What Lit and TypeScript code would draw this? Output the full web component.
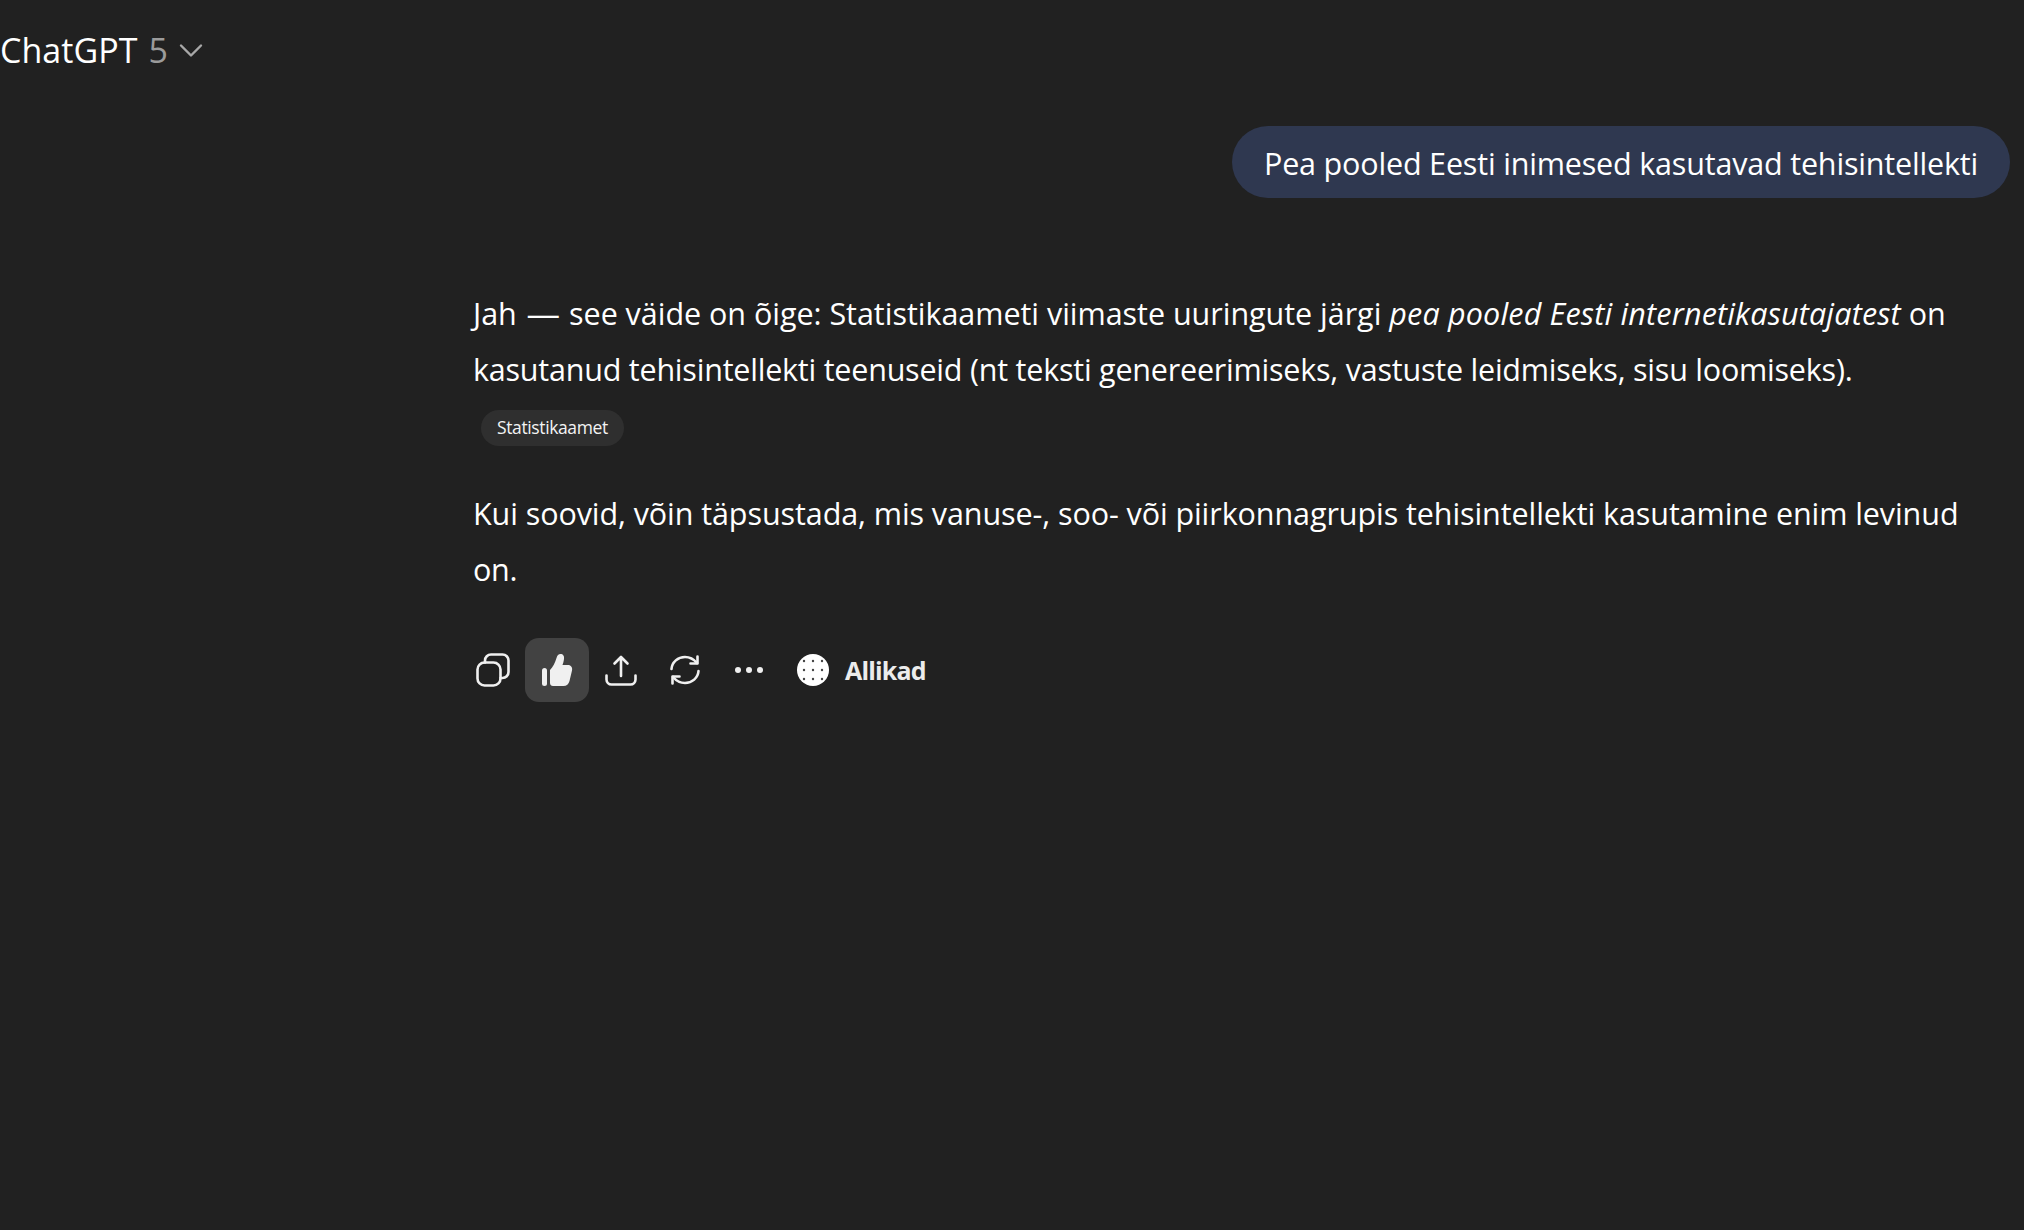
import { LitElement, html, css } from "lit";
import { customElement } from "lit/decorators.js";

@customElement("app-root")
export class AppRoot extends LitElement {
  static styles = css`
    :host {
      display: block;
      width: 2024px;
      height: 1230px;
      background: #212121;
      color: #fff;
      font-family: "Open Sans", "Noto Sans", sans-serif;
      overflow: hidden;
    }
    .header {
      display: flex;
      align-items: center;
      height: 100px;
      font-size: 34px;
      letter-spacing: 0.05px;
    }
    .ver { color: #9b9b9b; margin-left: 11px; }
    .chev { margin-left: 11px; color: #a8a8a8; }
    .user { display: flex; justify-content: flex-end; padding: 26px 14px 0 0; }
    .bubble {
      background: #2f3850;
      border-radius: 36px;
      height: 72px;
      padding: 2px 32px 0;
      box-sizing: border-box;
      display: flex;
      align-items: center;
      font-size: 30.5px;
      letter-spacing: -0.18px;
      white-space: nowrap;
    }
    .answer { margin: 87px 0 0 473px; width: 1530px; }
    p {
      margin: 0;
      font-size: 30.5px;
      line-height: 56px;
    }
    .line { display: block; white-space: nowrap; }
    .l1 { letter-spacing: -0.03px; }
    .l1 em { letter-spacing: 0.18px; }
    .dash { display: inline-block; transform: scaleX(1.1); margin: 0 3px; }
    .l2 { letter-spacing: -0.22px; }
    .l3 { letter-spacing: -0.08px; }
    .l4 { letter-spacing: -0.3px; }
    .chip-row { display: flex; padding: 13px 0 0 8px; height: 36px; margin-bottom: 39px; }
    .chip {
      background: #2f2f2f;
      border-radius: 18px;
      height: 36px;
      box-sizing: border-box;
      padding: 0 16px 2px;
      display: flex;
      align-items: center;
      font-size: 17.5px;
      letter-spacing: -0.38px;
      color: #f3f3f3;
    }
    .actions { display: flex; align-items: center; margin: 41px 0 0 -12px; }
    .btn {
      width: 64px;
      height: 64px;
      display: flex;
      align-items: center;
      justify-content: center;
      border-radius: 14px;
      color: #f0f0f0;
    }
    .btn.on { background: #424242; }
    .sources {
      display: flex;
      align-items: center;
      gap: 15px;
      padding-left: 15px;
      font-size: 25px;
      font-weight: 700;
      letter-spacing: -0.85px;
      color: #ececec;
    }
    svg { display: block; }
  `;

  render() {
    return html`
      <div class="header">
        <span>ChatGPT</span><span class="ver">5</span>
        <svg class="chev" width="24" height="24" viewBox="0 0 24 24" fill="none" stroke="currentColor" stroke-width="2.4" stroke-linecap="round" stroke-linejoin="round"><path d="M2 7.500l10 10 10-10"/></svg>
      </div>
      <div class="user"><div class="bubble">Pea pooled Eesti inimesed kasutavad tehisintellekti</div></div>
      <div class="answer">
        <p>
          <span class="line l1">Jah <span class="dash">—</span> see väide on õige: Statistikaameti viimaste uuringute järgi <em>pea pooled Eesti internetikasutajatest</em> on</span>
          <span class="line l2">kasutanud tehisintellekti teenuseid (nt teksti genereerimiseks, vastuste leidmiseks, sisu loomiseks).</span>
        </p>
        <div class="chip-row"><span class="chip">Statistikaamet</span></div>
        <p>
          <span class="line l3">Kui soovid, võin täpsustada, mis vanuse-, soo- või piirkonnagrupis tehisintellekti kasutamine enim levinud</span>
          <span class="line l4">on.</span>
        </p>
        <div class="actions">
          <div class="btn">
            <svg width="36" height="36" viewBox="0 0 36 36" fill="none" stroke="currentColor" stroke-width="2.6" stroke-linecap="round" stroke-linejoin="round">
              <rect x="2.500" y="10.500" width="23" height="23" rx="7"/>
              <path d="M10 10.500V8.500a6 6 0 0 1 6-6h11.500a6 6 0 0 1 6 6V20a6 6 0 0 1-6 6h-2"/>
            </svg>
          </div>
          <div class="btn on">
            <svg width="36" height="36" viewBox="0 0 36 36" fill="currentColor">
              <rect x="3" y="16" width="5" height="18" rx="2.500"/>
              <path d="M11 18C14 15 16 11 17.500 6 18.200 3.500 19.500 2 21.500 2 24 2 25.500 4 25 7 24.700 9.500 24 11.500 23.500 13H29C32 13 33.800 15.500 33 18.500L30.500 29C29.800 32 27.500 34 24.500 34H14C12.300 34 11 32.700 11 31Z"/>
            </svg>
          </div>
          <div class="btn">
            <svg width="36" height="36" viewBox="0 0 36 36" fill="none" stroke="currentColor" stroke-width="2.6" stroke-linecap="round" stroke-linejoin="round">
              <path d="M18 24V5M11.500 11.500L18 5l6.500 6.500"/>
              <path d="M3.500 23.500v4a5 5 0 0 0 5 5h19a5 5 0 0 0 5-5v-4"/>
            </svg>
          </div>
          <div class="btn">
            <svg width="36" height="36" viewBox="0 0 36 36" fill="none" stroke="currentColor" stroke-width="2.6" stroke-linecap="round" stroke-linejoin="round">
              <path d="M4.500 17C5 10 11 5 18 5c5 0 9 2.500 12 6"/>
              <path d="M30.500 4.500v7h-7"/>
              <path d="M31.500 19C31 26 25 31 18 31c-5 0-9-2.500-12-6"/>
              <path d="M5.500 31.500v-7h7"/>
            </svg>
          </div>
          <div class="btn">
            <svg width="36" height="36" viewBox="0 0 36 36" fill="currentColor">
              <circle cx="7" cy="18" r="3"/><circle cx="18" cy="18" r="3"/><circle cx="29" cy="18" r="3"/>
            </svg>
          </div>
          <div class="sources">
            <svg width="34" height="34" viewBox="0 0 34 34">
              <circle cx="17" cy="17" r="16" fill="#fff"/>
              <g fill="#444">
                <circle cx="8" cy="8" r="1.200"/><circle cx="17" cy="8" r="1.200"/><circle cx="26" cy="8" r="1.200"/>
                <circle cx="8" cy="17" r="1.200"/><circle cx="17" cy="17" r="1.200"/><circle cx="26" cy="17" r="1.200"/>
                <circle cx="8" cy="26" r="1.200"/><circle cx="17" cy="26" r="1.200"/><circle cx="26" cy="26" r="1.200"/>
              </g>
            </svg>
            <span>Allikad</span>
          </div>
        </div>
      </div>
    `;
  }
}
